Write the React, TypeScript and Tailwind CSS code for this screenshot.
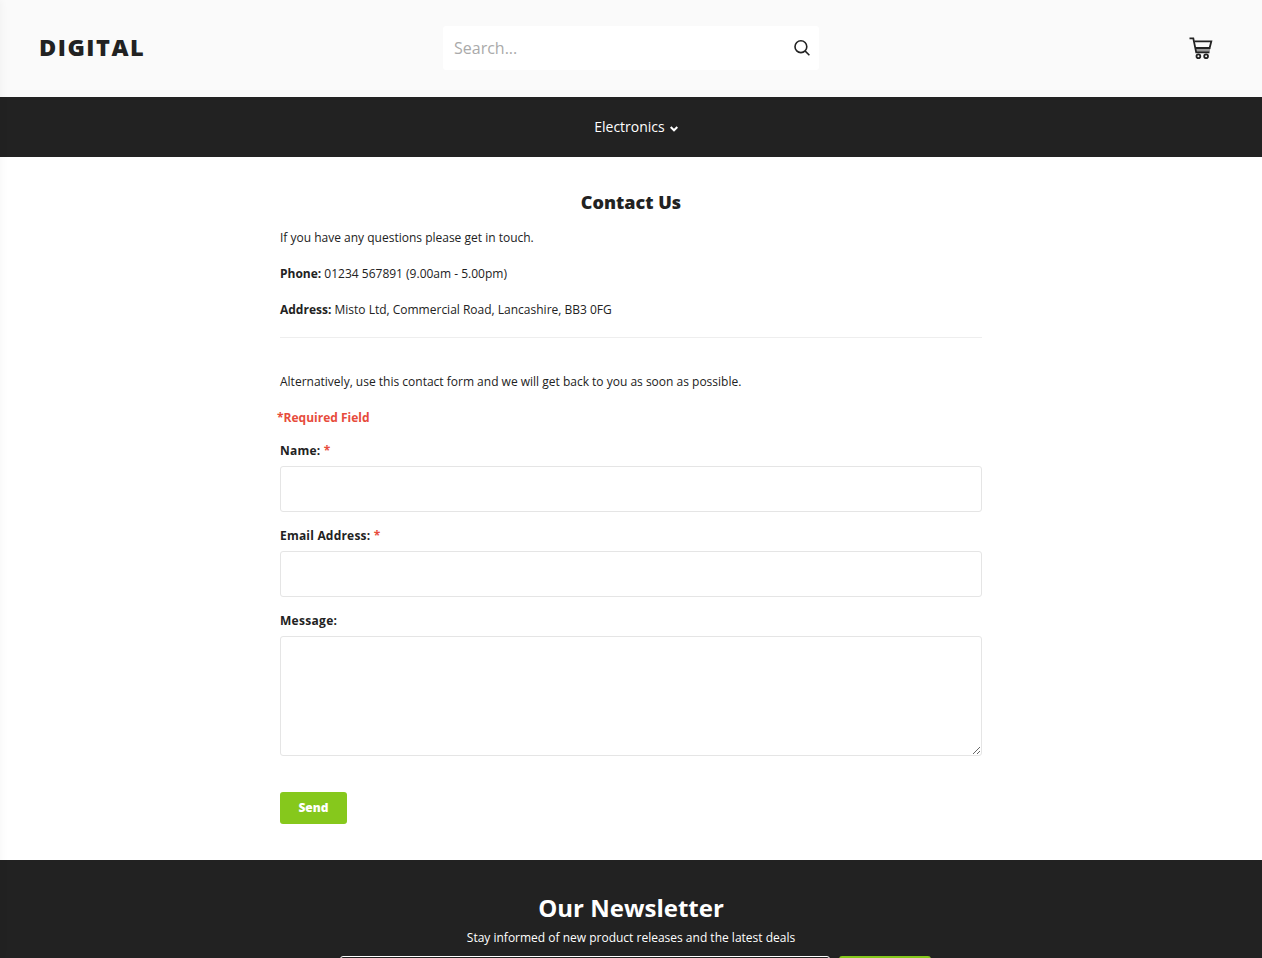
import React, { useState } from "react";

interface FieldProps {
  id: string;
  label: string;
  type?: string;
  value: string;
  onChange: (value: string) => void;
}

const Field: React.FC<FieldProps> = ({ id, label, type = "text", value, onChange }) => {
  return (
    <div className="mb-[15px]">
      <label htmlFor={id} className="mb-[6px] block h-[18px] text-xs leading-[18px] font-bold tracking-[0.2px]">
        {label} <span className="text-[#e74c3c]">*</span>
      </label>
      <input className="block h-[46px] w-full rounded-[3px] border border-[#e5e5e5] bg-white px-3 outline-none" type={type} id={id} value={value} onChange={(e) => onChange(e.target.value)} />
    </div>
  );
};

const App: React.FC = () => {
  const [search, setSearch] = useState<string>("");
  const [name, setName] = useState<string>("");
  const [email, setEmail] = useState<string>("");
  const [message, setMessage] = useState<string>("");
  const [newsletter, setNewsletter] = useState<string>("");

  return (
    <div className='h-screen overflow-hidden bg-white font-["Open_Sans",sans-serif] text-xs leading-[18px] text-[#222222]'>
      {/* shadow of the closed side menu */}
      <div className="fixed top-0 -left-5 h-full w-5 shadow-[0_0_10px_rgba(0,0,0,0.05)]"></div>

      <header className="grid h-[97px] grid-cols-[1fr_376px_1fr] items-center bg-[#fafafa] pr-[49px] pl-[39px]">
        <a href="#" className="mb-0.5 text-[23.5px] leading-none font-extrabold tracking-[1.5px]">
          DIGITAL
        </a>
        <form className="relative left-[5px] mb-px flex h-11 items-center rounded-[3px] bg-white pr-[9px] pl-[11px]" onSubmit={(e) => e.preventDefault()}>
          <input className="min-w-0 flex-1 text-base text-[#222222] outline-none placeholder:text-[#aaaaaa]" type="text" value={search} onChange={(e) => setSearch(e.target.value)} placeholder="Search..." />
          <button type="submit" aria-label="Search">
            <svg className="size-4" viewBox="0 0 16 16" fill="none" stroke="#222222" strokeWidth="1.6">
              <circle cx="6.9" cy="6.7" r="5.9" />
              <path d="M11 10.9 15.4 15.2" />
            </svg>
          </button>
        </form>
        <a href="#" aria-label="Cart" className="mb-0.5 justify-self-end">
          <svg className="block h-[22px] w-6" viewBox="0 0 24 22" fill="none" stroke="#222222" strokeWidth="1.8">
            <path d="M6.3 11H21.5L20.5 15H7Z" fill="#999999" stroke="none" />
            <path d="M0.5 1.3H4.3L7.2 15.4H20.5" />
            <path d="M5.4 4.4H22.3L20.6 11H6.8" />
            <circle cx="9.4" cy="19.2" r="1.9" />
            <circle cx="17.1" cy="19.2" r="1.9" />
          </svg>
        </a>
      </header>

      <nav className="flex h-[60px] items-center justify-center bg-[#222222] pl-[10px] text-sm text-white">
        <a href="#" className="flex items-center gap-[5px]">
          Electronics
          <svg className="mt-[3px] h-[6px] w-[8px]" viewBox="0 0 8 6" fill="none" stroke="currentColor" strokeWidth="2">
            <path d="M0.7 1 4 4.3 7.3 1" />
          </svg>
        </a>
      </nav>

      <main className="mx-auto h-[703px] w-[702px] pt-[33px]">
        <h1 className="mb-[15px] text-center text-lg leading-6 font-extrabold">Contact Us</h1>
        <p className="mb-[18px]">If you have any questions please get in touch.</p>
        <p className="mb-[18px]">
          <strong>Phone:</strong> 01234 567891 (9.00am - 5.00pm)
        </p>
        <p className="mb-[18px]">
          <strong>Address:</strong> Misto Ltd, Commercial Road, Lancashire, BB3 0FG
        </p>
        <hr className="mb-[35px] border-[#eeeeee]" />
        <p className="mb-[18px]">Alternatively, use this contact form and we will get back to you as soon as possible.</p>
        <p className="mb-[15px] -ml-[3px] font-bold text-[#e74c3c]">*Required Field</p>

        <form onSubmit={(e) => e.preventDefault()}>
          <Field id="name" label="Name:" value={name} onChange={setName} />
          <Field id="email" label="Email Address:" type="email" value={email} onChange={setEmail} />
          <label htmlFor="message" className="mb-[6px] block h-[18px] font-bold tracking-[0.3px]">
            Message:
          </label>
          <textarea className="mb-9 block h-[120px] w-full rounded-[3px] border border-[#e5e5e5] bg-white p-3 outline-none" id="message" value={message} onChange={(e) => setMessage(e.target.value)}></textarea>
          <button type="submit" className="block h-8 w-[67px] rounded-[3px] bg-[#86c81c] font-extrabold text-white">
            Send
          </button>
        </form>
      </main>

      <footer className="bg-[#222222] pt-8 text-center text-white">
        <h2 className="text-2xl leading-8 font-bold">Our Newsletter</h2>
        <p className="mt-[5px] mb-[9px]">Stay informed of new product releases and the latest deals</p>
        <form className="flex justify-center gap-[9px] pl-[9px]" onSubmit={(e) => e.preventDefault()}>
          <input className="h-10 w-[490px] rounded-[3px] border border-white bg-[#222222] px-3 outline-none" type="email" aria-label="Email" value={newsletter} onChange={(e) => setNewsletter(e.target.value)} />
          <button type="submit" aria-label="Subscribe" className="h-10 w-[92px] rounded-[3px] bg-[#86c81c]"></button>
        </form>
      </footer>
    </div>
  );
};

export default App;
